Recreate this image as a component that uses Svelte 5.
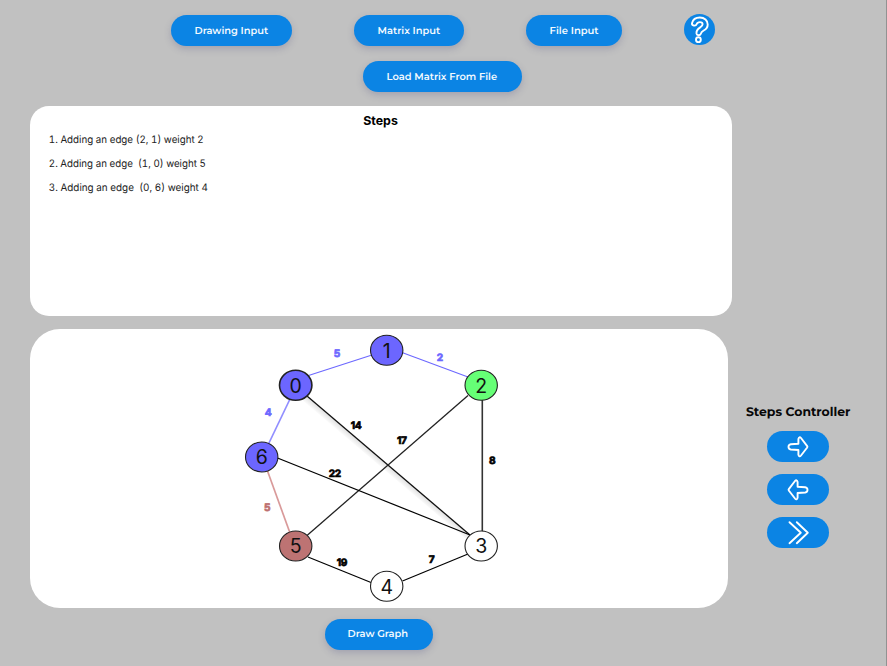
<script>
  const inputs = [
    { label: 'Drawing Input', width: 121, text: 73.5 },
    { label: 'Matrix Input', width: 110, text: 62.5 },
    { label: 'File Input', width: 96, text: 49 }
  ];

  const steps = [
    { text: '1. Adding an edge (2, 1) weight 2', width: 154.8 },
    { text: '2. Adding an edge\u00a0 (1, 0) weight 5', width: 157 },
    { text: '3. Adding an edge\u00a0 (0, 6) weight 4', width: 159 }
  ];

  const edges = [
    { x1: 307, y1: 376, x2: 372, y2: 355, color: '#6c68ff', w: 1.1, label: '5', lx: 337, ly: 353.3 },
    { x1: 402, y1: 352.5, x2: 468, y2: 377, color: '#6c68ff', w: 1.1, label: '2', lx: 440, ly: 357.6 },
    { x1: 290, y1: 399, x2: 268.5, y2: 444, color: '#918eff', w: 1.7, label: '4', lx: 268.3, ly: 412.6, lc: '#6c68ff' },
    { x1: 267.5, y1: 471, x2: 290, y2: 533, color: '#d99a9a', w: 1.7, label: '5', lx: 267.2, ly: 506.7, lc: '#bd6f6f' },
    { x1: 307, y1: 396, x2: 470, y2: 535, color: '#111', w: 1.3, label: '14', lx: 356.3, ly: 425.3, shadow: true },
    { x1: 468, y1: 395.5, x2: 307, y2: 535.5, color: '#222', w: 1.3, label: '17', lx: 402, ly: 440.2 },
    { x1: 482.3, y1: 400, x2: 482.3, y2: 532, color: '#333', w: 1.6, label: '8', lx: 492.3, ly: 460.5 },
    { x1: 277.5, y1: 458, x2: 470, y2: 535, color: '#000', w: 1.2, label: '22', lx: 335, ly: 473.4 },
    { x1: 308, y1: 557, x2: 371, y2: 582.5, color: '#000', w: 1.2, label: '19', lx: 342, ly: 561.7 },
    { x1: 402.5, y1: 581, x2: 468, y2: 554, color: '#000', w: 1.2, label: '7', lx: 431.8, ly: 559 }
  ];

  const nodes = [
    { id: '1', x: 386.7, y: 350.3, fill: '#6c66ff' },
    { id: '0', x: 295.7, y: 385.3, fill: '#6c66ff', ring: 1.6 },
    { id: '2', x: 481.2, y: 385.3, fill: '#66ff76' },
    { id: '6', x: 261.7, y: 457, fill: '#6c66ff' },
    { id: '3', x: 481.2, y: 546, fill: '#fff' },
    { id: '5', x: 295.7, y: 546, fill: '#bd7373' },
    { id: '4', x: 386.7, y: 586.3, fill: '#fff' }
  ];
</script>

{#snippet pill(label, width, text)}
  <button class="pill" style:width="{width}px">
    <svg width={text} height="16" aria-label={label}>
      <text x="-0.4" y="11.3" textLength={text} lengthAdjust="spacingAndGlyphs">{label}</text>
    </svg>
  </button>
{/snippet}

<main>
  <header>
    <nav>
      {#each inputs as item}
        {@render pill(item.label, item.width, item.text)}
      {/each}
      <button class="help" aria-label="Help">
        <svg width="31" height="31" viewBox="0 0 31 31">
          <path d="M8 9.2C9 5.1 12.1 3.5 15.8 3.5C20.5 3.5 23.7 6.4 23.7 10.4C23.7 13.3 22.2 15.1 19.7 16.5C17.7 17.6 17.1 18.4 16.9 19.7C16.6 21.8 12.8 21.8 12.5 19.7C12.2 16.8 13.7 14.9 16.2 13.4C18 12.3 18.6 11.6 18.6 10.3C18.6 8.9 17.6 8.1 15.9 8.1C14.1 8.1 13.1 8.9 12.6 10.3C11.8 12.5 7.5 11.8 8 9.2Z" />
          <circle cx="14.4" cy="25.7" r="2.4" />
        </svg>
      </button>
    </nav>
    <div class="load">{@render pill('Load Matrix From File', 158.5, 110.5)}</div>
  </header>

  <div class="content">
    <div class="workspace">
      <section class="steps">
        <h2>Steps</h2>
        {#each steps as step}
          <svg class="step" width={step.width} height="24">
            <text x="-0.2" y="15.2" textLength={step.width} lengthAdjust="spacingAndGlyphs" xml:space="preserve">{step.text}</text>
          </svg>
        {/each}
      </section>

      <section class="graph">
        <svg width="698" height="279" viewBox="30 329 698 279">
          <defs>
            <linearGradient id="fade" gradientUnits="userSpaceOnUse" x1="388" y1="466" x2="384" y2="470.7">
              <stop offset="0" stop-color="#000" stop-opacity=".11" />
              <stop offset="1" stop-color="#000" stop-opacity="0" />
            </linearGradient>
          </defs>
          {#each edges as e}
            {#if e.shadow}
              <path d="M307 396L470 535L466 539L302 400Z" fill="url(#fade)" />
            {/if}
            <line x1={e.x1} y1={e.y1} x2={e.x2} y2={e.y2} stroke={e.color} stroke-width={e.w} />
            <text class="weight" x={e.lx - 0.2} y={e.ly + 3.8} fill={e.lc ?? (e.color === '#6c68ff' ? e.color : '#000')} stroke={e.lc ?? (e.color === '#6c68ff' ? e.color : '#000')}>{e.label}</text>
          {/each}
          {#each nodes as n}
            <ellipse cx={n.x} cy={n.y} rx="16.2" ry="15" fill={n.fill} stroke="#222" stroke-width={n.ring ?? 1.1} />
            <text class="node" x={n.x} y={n.y + 7.3}>{n.id}</text>
          {/each}
        </svg>
      </section>
      <div class="draw">{@render pill('Draw Graph', 108, 60.5)}</div>
    </div>

    <aside>
      <svg class="title" width="105" height="18">
        <text x="0.9" y="13.4" textLength="104.5" lengthAdjust="spacingAndGlyphs">Steps Controller</text>
      </svg>
      <button class="control" aria-label="Next step">
        <svg width="62" height="31" viewBox="0 0 62 31">
          <path d="M23.8 13.2L31.4 12.7V8.1Q32.3 5 34 7L40.2 15.1Q40.7 15.8 40.2 16.5L34 24.5Q32.3 26.5 31.4 23.7V19L23.8 18.5Q21.4 18 21.5 15.8Q21.5 13.6 23.8 13.2Z" />
        </svg>
      </button>
      <button class="control" aria-label="Previous step">
        <svg width="62" height="31" viewBox="0 0 62 31">
          <path d="M38.2 13.2L30.6 12.7V8.1Q29.7 5 28 7L21.8 15.1Q21.3 15.8 21.8 16.5L28 24.5Q29.7 26.5 30.6 23.7V19L38.2 18.5Q40.6 18 40.5 15.8Q40.5 13.6 38.2 13.2Z" />
        </svg>
      </button>
      <button class="control" aria-label="Run to the end">
        <svg width="62" height="31" viewBox="0 0 62 31">
          <path d="M22.5 5.2L33.8 15.7L22.5 26.2M29.8 5.2L40.8 15.7L29.8 26.2" />
        </svg>
      </button>
    </aside>
  </div>
</main>

<style>
  main {
    box-sizing: border-box;
    width: 887px;
    height: 666px;
    overflow: hidden;
    background: #c1c1c1;
    border-right: 1px solid #929292;
    font-family: Inter, sans-serif;
  }
  header {
    box-sizing: border-box;
    height: 106px;
    padding-top: 15px;
  }
  nav {
    display: flex;
    height: 46px;
    padding-left: 171px;
    gap: 62px;
  }
  .load {
    padding-left: 363.3px;
  }
  button {
    display: flex;
    align-items: center;
    justify-content: center;
    flex: none;
    height: 31px;
    padding: 0;
    border: 0;
    background: #0b84e4;
  }
  .pill {
    border-radius: 16px;
    box-shadow: 0 3px 7px rgba(80, 80, 130, 0.27);
  }
  svg {
    display: block;
    overflow: visible;
  }
  .pill text {
    font: 600 10px Montserrat, Inter, sans-serif;
    text-rendering: geometricPrecision;
    fill: #f3faff;
  }
  .help {
    width: 31px;
    margin-top: -1px;
    border-radius: 50%;
  }
  .help path,
  .help circle,
  .control path {
    fill: none;
    stroke: #fff;
    stroke-width: 1.9;
    stroke-linecap: round;
    stroke-linejoin: round;
  }
  .content {
    display: flex;
    padding-left: 30px;
  }
  .workspace {
    width: 702px;
  }
  .steps {
    box-sizing: border-box;
    height: 210.4px;
    padding: 5px 20px 0 19px;
    border-radius: 19px;
    background: #fff;
  }
  h2 {
    height: 17px;
    margin: 0;
    font: 700 12.4px/20px Inter, sans-serif;
    text-align: center;
    color: #000;
  }
  .step text {
    font: 400 10.3px Inter, sans-serif;
    font-variant-numeric: tabular-nums;
    text-rendering: geometricPrecision;
    fill: #222;
  }
  .graph {
    width: 698px;
    height: 279px;
    margin-top: 12.6px;
    border-radius: 30px;
    background: #fff;
  }
  .weight {
    font: 700 10.2px Inter, sans-serif;
    text-anchor: middle;
    letter-spacing: -0.4px;
    text-rendering: geometricPrecision;
    stroke-width: 0.7;
  }
  .node {
    font: 400 19.5px Inter, sans-serif;
    text-anchor: middle;
    fill: #111;
  }
  .draw {
    padding: 11px 0 0 294.5px;
  }
  aside {
    display: flex;
    flex-direction: column;
    align-items: center;
    width: 131px;
    padding-top: 297px;
  }
  .title text {
    font: 700 12.4px Montserrat, Inter, sans-serif;
    text-rendering: geometricPrecision;
    fill: #080808;
  }
  .control {
    width: 62px;
    margin-bottom: 12.2px;
    border-radius: 16px;
  }
  .title {
    margin-bottom: 10px;
  }
</style>
